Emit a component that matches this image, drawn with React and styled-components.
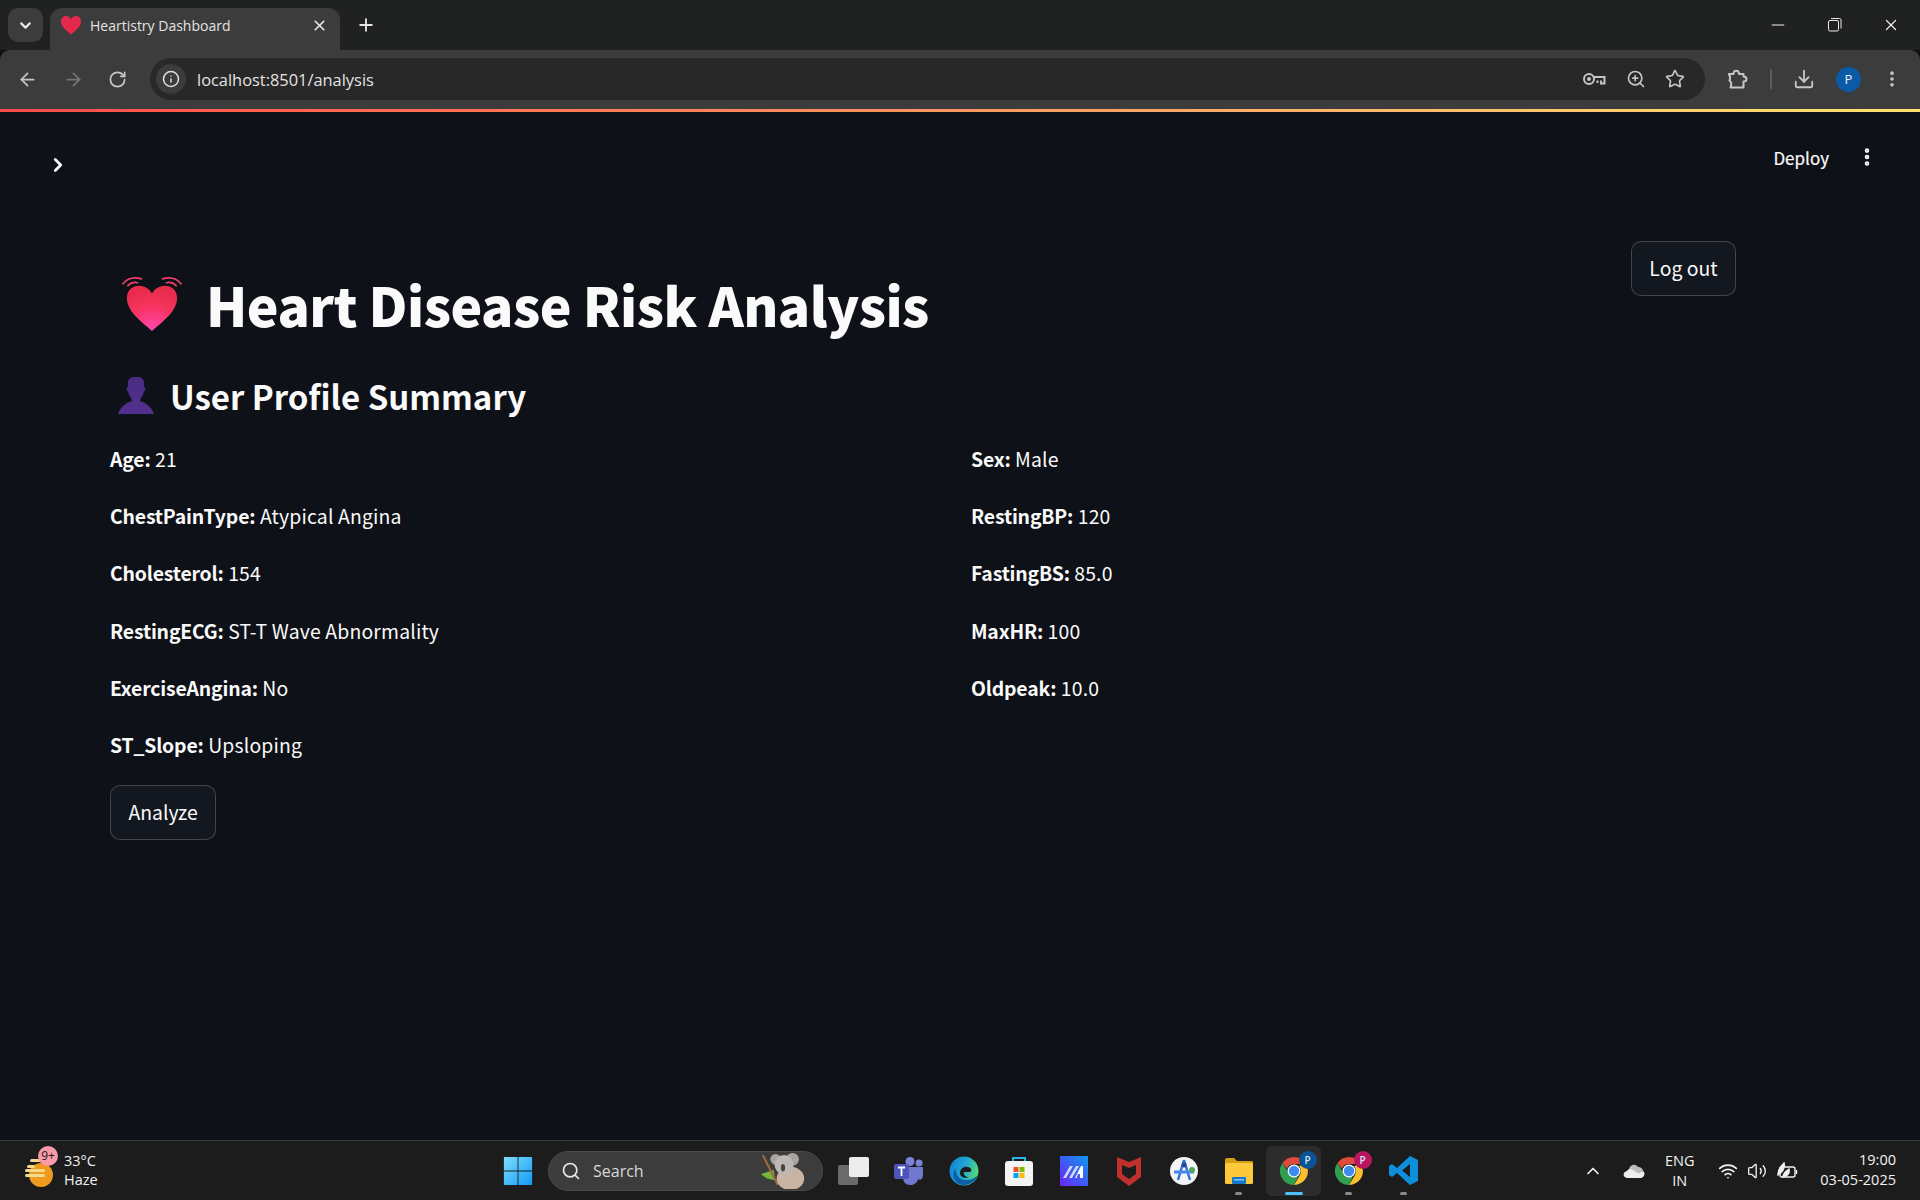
import React from 'react'
import styled, { createGlobalStyle } from 'styled-components'
import {
  ArrowLeft, ArrowRight, RotateCw, Info, ZoomIn, Star, Download, MoreVertical,
  Minus, X, Plus, ChevronDown, ChevronRight, ChevronUp, Search, Wifi, Volume2,
} from 'lucide-react'

const UI_FONT = `"Open Sans", "Noto Sans", sans-serif`
const PAGE_FONT = `"Noto Sans CJK SC", "Noto Sans", sans-serif`

const GlobalStyle = createGlobalStyle`
  html, body { margin: 0; padding: 0; background: #0e1117; }
  * { box-sizing: border-box; }
`

const profile = [
  ['Age', '21'], ['Sex', 'Male'],
  ['ChestPainType', 'Atypical Angina'], ['RestingBP', '120'],
  ['Cholesterol', '154'], ['FastingBS', '85.0'],
  ['RestingECG', 'ST-T Wave Abnormality'], ['MaxHR', '100'],
  ['ExerciseAngina', 'No'], ['Oldpeak', '10.0'],
  ['ST_Slope', 'Upsloping'],
]

function BeatingHeart() {
  return (
    <svg width="60" height="56" viewBox="0 0 62 58" fill="none">
      <defs>
        <radialGradient id="heartFill" cx="0.5" cy="0.95" r="0.85">
          <stop offset="0" stopColor="#ff46ac" />
          <stop offset="0.6" stopColor="#f7345f" />
          <stop offset="1" stopColor="#e92c4c" />
        </radialGradient>
      </defs>
      <path d="M31 57C24 50 5 38 5 23C5 14 11 10 18 10C24 10 29 14 31 18C33 14 38 10 44 10C51 10 57 14 57 23C57 38 38 50 31 57Z" fill="url(#heartFill)" />
      <path d="M1 8C6 2 13 1 20 3M6 10C9 7 12 6 16 7" stroke="#f23f6b" strokeWidth="1.800" strokeLinecap="round" />
      <path d="M61 8C56 2 49 1 42 3M56 10C53 7 50 6 46 7" stroke="#f23f6b" strokeWidth="1.800" strokeLinecap="round" />
    </svg>
  )
}

function Bust() {
  return (
    <svg width="40" height="40" viewBox="0 0 40 40">
      <defs>
        <linearGradient id="bustFill" x1="0" y1="0" x2="0" y2="1">
          <stop offset="0" stopColor="#4b2c83" />
          <stop offset="1" stopColor="#52308f" />
        </linearGradient>
      </defs>
      <path d="M12 7C12 2 15 1 20 1C25 1 28 2 28 7V11C30 11 30 15 28 15C27 20 24 23 24 25C31 27 36 32 38 38H2C4 32 9 27 16 25C16 23 13 20 12 15C10 15 10 11 12 11Z" fill="url(#bustFill)" />
    </svg>
  )
}

function TabHeart() {
  return (
    <svg width="22" height="20" viewBox="0 0 22 20">
      <path d="M11 19.500C7 16 1 12 1 6.500C1 3 3.500 1 6 1C8 1 10 2 11 4C12 2 14 1 16 1C18.500 1 21 3 21 6.500C21 12 15 16 11 19.500Z" fill="#e5294c" />
    </svg>
  )
}

function RestoreIcon() {
  return (
    <svg width="14" height="14" viewBox="0 0 14 14" fill="none" stroke="#e8e8e8" strokeWidth="1">
      <rect x="0.500" y="2.500" width="10" height="10.500" rx="1.500" />
      <path d="M3 0.500H11.500C12.500 0.500 13 1 13 2V10.500" />
    </svg>
  )
}

function KeyIcon() {
  return (
    <svg width="24" height="14" viewBox="0 0 24 14" fill="none" stroke="#c4c4c4" strokeWidth="2">
      <circle cx="7" cy="7" r="5" />
      <circle cx="7" cy="7" r="1" fill="#c4c4c4" />
      <path d="M12 5H22.500V11.500H19V8.500M15.500 8.500V11" />
    </svg>
  )
}

function ExtensionIcon() {
  return (
    <svg width="22" height="20" viewBox="0 0 22 20" fill="none" stroke="#c6c6c6" strokeWidth="2" strokeLinejoin="round">
      <path d="M2 5H6.500C6.500 0.500 12 0.500 12 5H16.500V7.500C20.500 7.500 20.500 12.500 16.500 12.500V18.500H3.500C4.500 16 4.500 13 2.500 11.500C3.500 9.500 3 7 2 5Z" />
    </svg>
  )
}

function WeatherIcon() {
  return (
    <svg width="30" height="30" viewBox="0 0 30 30">
      <circle cx="17" cy="17" r="12" fill="#ee9a1e" />
      <rect x="3" y="7" width="8" height="3" rx="1.500" fill="#f5d98d" />
      <rect x="6" y="1" width="14" height="3" rx="1.500" fill="#f5d98d" />
      <rect x="1" y="11" width="20" height="3" rx="1.500" fill="#f5d98d" />
      <rect x="1" y="16" width="20" height="3" rx="1.500" fill="#f5d98d" />
    </svg>
  )
}

function WindowsIcon() {
  return (
    <svg width="30" height="30" viewBox="0 0 34 34">
      <defs>
        <linearGradient id="winFill" x1="0" y1="0" x2="1" y2="1">
          <stop offset="0" stopColor="#7fdcff" />
          <stop offset="1" stopColor="#0f9bf2" />
        </linearGradient>
      </defs>
      <path d="M1 2a1 1 0 0 1 1-1H16.500V16.500H1ZM17.500 1H32a1 1 0 0 1 1 1V16.500H17.500ZM1 17.500H16.500V33H2a1 1 0 0 1-1-1ZM17.500 17.500H33V32a1 1 0 0 1-1 1H17.500Z" fill="url(#winFill)" />
    </svg>
  )
}

function Koala() {
  return (
    <svg width="50" height="36" viewBox="0 0 46 34">
      <path d="M2 20L14 16L16 26L8 24Z" fill="#77b53c" />
      <path d="M4 2L18 30" stroke="#a06a3c" strokeWidth="2" />
      <ellipse cx="30" cy="24" rx="13" ry="11" fill="#c9b4a4" />
      <circle cx="16" cy="6" r="5" fill="#a9a3a0" />
      <circle cx="32" cy="6" r="6" fill="#a9a3a0" />
      <ellipse cx="24" cy="11" rx="9" ry="9" fill="#bdb8b4" />
      <ellipse cx="23" cy="14" rx="2" ry="3.500" fill="#4a4543" />
    </svg>
  )
}

function TaskViewIcon() {
  return (
    <svg width="32" height="30" viewBox="0 0 32 30">
      <rect x="0" y="9" width="20" height="20" rx="2" fill="#6b6b6b" />
      <rect x="11" y="1" width="20" height="20" rx="2" fill="#ececec" />
    </svg>
  )
}

function TeamsIcon() {
  return (
    <svg width="30" height="28" viewBox="0 0 30 28">
      <circle cx="25" cy="6" r="3.500" fill="#7b83d8" />
      <circle cx="16" cy="4.500" r="4.500" fill="#7b83d8" />
      <path d="M9 10H29V18C29 22 26 24 24 22C23 26 20 28 16 28C12 28 9 25 9 20Z" fill="#7178cf" />
      <rect x="0" y="7" width="15" height="15" rx="2" fill="#4e55b8" />
      <path d="M4 10.500H11M7.500 10.500V19" stroke="#fff" strokeWidth="1.800" />
    </svg>
  )
}

function EdgeIcon() {
  return (
    <svg width="30" height="30" viewBox="0 0 30 30">
      <defs>
        <linearGradient id="edgeFill" x1="0" y1="0" x2="1" y2="0.300">
          <stop offset="0" stopColor="#0c7fd0" />
          <stop offset="0.600" stopColor="#23a8d6" />
          <stop offset="1" stopColor="#4fd67a" />
        </linearGradient>
      </defs>
      <circle cx="15" cy="15" r="14.500" fill="url(#edgeFill)" />
      <path d="M29 19C26 27 17 31 10 28C3 24 3 16 7 12C6 17 9 24 17 24C22 24 26 22 29 19Z" fill="#0a5fa8" />
      <path d="M11 17C11 13 15 10 19 11C23 12 23 15 21 16H15C14 19 17 21 20 21C16 23 11 21 11 17Z" fill="#1c1c1c" />
    </svg>
  )
}

function StoreIcon() {
  return (
    <svg width="28" height="30" viewBox="0 0 28 30">
      <path d="M8 6V2H20V6" fill="none" stroke="#2bb3e8" strokeWidth="2" />
      <rect x="0" y="5" width="28" height="25" rx="3" fill="#f4f4f4" />
      <rect x="8.500" y="11" width="5" height="5" fill="#f25022" />
      <rect x="14.500" y="11" width="5" height="5" fill="#7fba00" />
      <rect x="8.500" y="17" width="5" height="5" fill="#00a4ef" />
      <rect x="14.500" y="17" width="5" height="5" fill="#ffb900" />
    </svg>
  )
}

function MaIcon() {
  return (
    <svg width="28" height="30" viewBox="0 0 28 30">
      <defs>
        <linearGradient id="maFill" x1="0" y1="1" x2="1" y2="0">
          <stop offset="0" stopColor="#6a25f5" />
          <stop offset="1" stopColor="#1096f0" />
        </linearGradient>
      </defs>
      <rect width="28" height="30" fill="url(#maFill)" />
      <path d="M3 22L10 10H13L6 22ZM9 22L16 10H19L12 22Z" fill="#cfd8ff" />
      <path d="M15 22L21 10H23V22H20V18H18L16.500 22Z" fill="#fff" />
    </svg>
  )
}

function McafeeIcon() {
  return (
    <svg width="26" height="30" viewBox="0 0 26 30">
      <path d="M1 1L13 6L25 1V21L13 30L1 21ZM6 9V18L13 23L20 18V9L13 12Z" fill="#c0302c" fillRule="evenodd" />
    </svg>
  )
}

function StudioIcon() {
  return (
    <svg width="28" height="28" viewBox="0 0 28 28">
      <circle cx="14" cy="14" r="14" fill="#f4f4f4" />
      <path d="M14 3L8 23M14 3L20 23" stroke="#2f6fde" strokeWidth="2.400" />
      <path d="M4 15L24 15" stroke="#4a86f0" strokeWidth="3" />
      <circle cx="14" cy="8" r="2.500" fill="#2c4a8c" />
      <circle cx="22" cy="13" r="3" fill="#4fa860" />
    </svg>
  )
}

function FolderIcon() {
  return (
    <svg width="28" height="27" viewBox="0 0 28 27">
      <path d="M0 3a2 2 0 0 1 2-2H9L12 4H27a1 1 0 0 1 1 1V9H0Z" fill="#d99f12" />
      <rect x="0" y="6" width="28" height="21" rx="1.500" fill="#fbc93a" />
      <rect x="7" y="20" width="14" height="7" rx="1" fill="#1478c8" />
      <rect x="9" y="22" width="10" height="1.500" fill="#7fc8f5" />
    </svg>
  )
}

function ChromeLogo({ badge, badgeColor }) {
  return (
    <ChromeWrap>
      <svg width="28" height="28" viewBox="0 0 28 28">
        <path d="M14 0A14 14 0 0 1 26.100 7H14C10 7 7.500 9.500 7 12L2.500 6A14 14 0 0 1 14 0Z" fill="#e04a3a" />
        <path d="M26.100 7A14 14 0 0 1 14 28L20 18C21.500 15 21 11 19 9Z" fill="#fbc02d" />
        <path d="M14 28A14 14 0 0 1 2.500 6L8 15.500C10 19.500 14 21 18 19.500Z" fill="#2f9e4f" />
        <circle cx="14" cy="14" r="6.500" fill="#fff" />
        <circle cx="14" cy="14" r="5.200" fill="#3f8cf0" />
      </svg>
      <ChromeBadge $color={badgeColor}>{badge}</ChromeBadge>
    </ChromeWrap>
  )
}

function VsCodeIcon() {
  return (
    <svg width="29" height="29" viewBox="0 0 29 29">
      <path d="M21 0L29 4V25L21 29L8 17L3 21L0 19V10L3 8L8 12ZM21 8L13 14.500L21 21Z" fill="#0d8fdc" fillRule="evenodd" />
    </svg>
  )
}

function OneDriveIcon() {
  return (
    <svg width="22" height="14" viewBox="0 0 22 14">
      <path d="M6 5C7 1 12 -1 15 3C18 3 20 5 20 7L10 11Z" fill="#bdbdbd" />
      <path d="M4 14C0 14 -1 8 4 7C6 4 9 5 11 7L15 9L20 7C23 9 21 14 18 14Z" fill="#ededed" />
    </svg>
  )
}

function BatteryIcon() {
  return (
    <svg width="22" height="20" viewBox="0 0 22 20" fill="none" stroke="#f0f0f0" strokeWidth="1.400">
      <rect x="4" y="6" width="15" height="10" rx="2" />
      <path d="M20.500 9V13" />
      <path d="M2 13C2 8 5 5 8 2C9 6 8 10 2 14Z" fill="#f0f0f0" />
      <path d="M7 16C7 12 10 10 13 8C14 12 12 15 7 16Z" fill="#f0f0f0" />
    </svg>
  )
}

export default function App() {
  return (
    <Screen>
      <GlobalStyle />
      <TitleBar>
        <TabSearch><ChevronDown size={17} strokeWidth={3} color="#e8e8e8" /></TabSearch>
        <Tab>
          <TabHeart />
          <TabTitle>Heartistry Dashboard</TabTitle>
          <X size={17} strokeWidth={2.4} color="#e4e4e4" />
        </Tab>
        <NewTab><Plus size={20} strokeWidth={2.2} color="#e4e4e4" /></NewTab>
        <WindowControls>
          <Minus size={20} strokeWidth={1} absoluteStrokeWidth color="#f0f0f0" />
          <RestoreIcon />
          <X size={18} strokeWidth={1.200} absoluteStrokeWidth color="#f0f0f0" />
        </WindowControls>
      </TitleBar>

      <Toolbar>
        <NavIcons>
          <ArrowLeft size={21} strokeWidth={2} color="#c6c6c6" />
          <ArrowRight size={21} strokeWidth={2} color="#757575" />
          <RotateCw size={19} strokeWidth={2.200} color="#c6c6c6" />
        </NavIcons>
        <AddressBar>
          <InfoChip><Info size={18} strokeWidth={2} color="#e0e0e0" /></InfoChip>
          <Url>localhost:8501/analysis</Url>
          <AddressIcons>
            <KeyIcon />
            <ZoomIn size={20} strokeWidth={2} color="#c4c4c4" />
            <Star size={20} strokeWidth={2} color="#c4c4c4" />
          </AddressIcons>
        </AddressBar>
        <ToolbarEnd>
          <ExtensionIcon />
          <ToolbarDivider />
          <Download size={22} strokeWidth={2} color="#c6c6c6" />
          <Avatar>P</Avatar>
          <MoreVertical size={20} strokeWidth={2.400} color="#c6c6c6" />
        </ToolbarEnd>
      </Toolbar>
      <RainbowLine />

      <Page>
        <AppHeader>
          <SidebarToggle><ChevronRight size={22} strokeWidth={3} color="#fafafa" /></SidebarToggle>
          <HeaderActions>
            <Deploy>Deploy</Deploy>
            <MoreVertical size={22} strokeWidth={3} color="#fafafa" />
          </HeaderActions>
        </AppHeader>

        <Main>
          <TopRow>
            <Title>
              <BeatingHeart />
              Heart Disease Risk Analysis
            </Title>
            <StreamButton>Log out</StreamButton>
          </TopRow>
          <Subtitle>
            <Bust />
            User Profile Summary
          </Subtitle>
          <ProfileGrid>
            {profile.map(([label, value]) => (
              <ProfileItem key={label}><strong>{label}:</strong> {value}</ProfileItem>
            ))}
          </ProfileGrid>
          <StreamButton>Analyze</StreamButton>
        </Main>
      </Page>

      <Taskbar>
        <Weather>
          <WeatherIconWrap>
            <WeatherIcon />
            <WeatherBadge>9+</WeatherBadge>
          </WeatherIconWrap>
          <WeatherText>
            <span>33°C</span>
            <span>Haze</span>
          </WeatherText>
        </Weather>

        <TaskCenter>
          <StartButton><WindowsIcon /></StartButton>
          <SearchBox>
            <Search size={20} strokeWidth={2} color="#e8e8e8" />
            <SearchLabel>Search</SearchLabel>
            <Koala />
          </SearchBox>
          <TaskApp><TaskViewIcon /></TaskApp>
          <TaskApp><TeamsIcon /></TaskApp>
          <TaskApp><EdgeIcon /></TaskApp>
          <TaskApp><StoreIcon /></TaskApp>
          <TaskApp><MaIcon /></TaskApp>
          <TaskApp><McafeeIcon /></TaskApp>
          <TaskApp><StudioIcon /></TaskApp>
          <TaskApp $open><FolderIcon /></TaskApp>
          <TaskApp $active>
            <ChromeLogo badge="P" badgeColor="#0b5394" />
          </TaskApp>
          <TaskApp $open>
            <ChromeLogo badge="P" badgeColor="#b8175f" />
          </TaskApp>
          <TaskApp $open><VsCodeIcon /></TaskApp>
        </TaskCenter>

        <Tray>
          <ChevronUp size={20} strokeWidth={2} color="#f0f0f0" />
          <OneDriveIcon />
          <Lang>
            <span>ENG</span>
            <span>IN</span>
          </Lang>
          <TrayIcons>
            <Wifi size={20} strokeWidth={2} color="#f0f0f0" />
            <Volume2 size={20} strokeWidth={1.600} color="#f0f0f0" />
            <BatteryIcon />
          </TrayIcons>
          <Clock>
            <span>19:00</span>
            <span>03-05-2025</span>
          </Clock>
        </Tray>
      </Taskbar>
    </Screen>
  )
}

const Screen = styled.div`
  width: 1920px;
  height: 1200px;
  display: flex;
  flex-direction: column;
  overflow: hidden;
  background: #0e1117;
  font-family: ${UI_FONT};
`

const TitleBar = styled.div`
  height: 50px;
  flex: none;
  display: flex;
  align-items: flex-start;
  padding: 8px 0 0 8px;
  background: #202221;
`

const TabSearch = styled.div`
  width: 35px;
  height: 34px;
  border-radius: 10px;
  display: flex;
  align-items: center;
  justify-content: center;
  background: #3c3c3c;
`

const Tab = styled.div`
  width: 290px;
  height: 42px;
  margin-left: 7px;
  padding: 0 12px 8px 10px;
  border-radius: 12px 12px 0 0;
  display: flex;
  align-items: center;
  background: #3c3c3c;
`

const TabTitle = styled.span`
  flex: 1;
  margin-left: 8px;
  font-size: 14px;
  color: #e3e3e3;
`

const NewTab = styled.div`
  width: 32px;
  height: 34px;
  margin-left: 10px;
  display: flex;
  align-items: center;
  justify-content: center;
`

const WindowControls = styled.div`
  margin-left: auto;
  height: 34px;
  padding-right: 20px;
  display: flex;
  align-items: center;
  gap: 40px;
`

const Toolbar = styled.div`
  height: 59px;
  flex: none;
  padding-bottom: 1px;
  display: flex;
  align-items: center;
  background: #3c3c3c;
  border-radius: 10px 10px 0 0;
`

const NavIcons = styled.div`
  width: 150px;
  padding: 0 23px 0 17px;
  display: flex;
  align-items: center;
  justify-content: space-between;
`

const AddressBar = styled.div`
  width: 1555px;
  height: 42px;
  padding: 0 20px 0 6px;
  border-radius: 21px;
  display: flex;
  align-items: center;
  background: #282828;
`

const InfoChip = styled.div`
  width: 30px;
  height: 30px;
  border-radius: 50%;
  display: flex;
  align-items: center;
  justify-content: center;
  background: #3c3c3c;
`

const Url = styled.span`
  margin-left: 11px;
  font-size: 16.400px;
  color: #e3e3e3;
`

const AddressIcons = styled.div`
  margin-left: auto;
  width: 103px;
  display: flex;
  align-items: center;
  justify-content: space-between;
`

const ToolbarEnd = styled.div`
  flex: 1;
  padding: 0 18px 0 22px;
  display: flex;
  align-items: center;
  justify-content: space-between;
`

const ToolbarDivider = styled.div`
  width: 2px;
  height: 20px;
  background: #5c5c5c;
`

const Avatar = styled.div`
  width: 25px;
  height: 25px;
  border-radius: 50%;
  display: flex;
  align-items: center;
  justify-content: center;
  background: #0b5aa5;
  color: #e8f0fa;
  font-size: 13px;
`

const RainbowLine = styled.div`
  height: 3px;
  flex: none;
  background: linear-gradient(90deg, #ff4b4b 0%, #ff7a55 30%, #ffb56b 70%, #ffe36e 100%);
`

const Page = styled.main`
  flex: 1;
  min-height: 0;
  display: flex;
  flex-direction: column;
  font-family: ${PAGE_FONT};
  color: #fafafa;
`

const AppHeader = styled.header`
  height: 70px;
  flex: none;
  padding: 20px 42px 0 47px;
  display: flex;
  align-items: center;
  justify-content: space-between;
`

const SidebarToggle = styled.div`
  display: flex;
  margin-top: 16px;
`

const HeaderActions = styled.div`
  display: flex;
  align-items: center;
  gap: 27px;
`

const Deploy = styled.span`
  font-size: 17px;
  font-weight: 400;
  -webkit-text-stroke: 0.2px #fafafa;
`

const Main = styled.div`
  width: 1736px;
  padding: 59px 0 0 110px;
`

const TopRow = styled.div`
  display: flex;
  align-items: flex-start;
  justify-content: space-between;
`

const Title = styled.h1`
  margin: 24px 0 0 12px;
  display: flex;
  align-items: center;
  gap: 24px;
  font-size: 53.500px;
  line-height: 77px;
  font-weight: 900;
  letter-spacing: -0.550px;
`

const StreamButton = styled.button`
  height: 55px;
  padding: 0 17.500px 2px;
  flex: none;
  border: 1px solid rgba(250, 250, 250, 0.2);
  border-radius: 10px;
  background: #13171f;
  color: #fafafa;
  font-family: ${PAGE_FONT};
  font-size: 19.400px;
  line-height: 1;
`

const Subtitle = styled.h2`
  margin: 28px 0 0 6px;
  display: flex;
  align-items: center;
  gap: 14px;
  font-size: 33px;
  line-height: 52px;
  font-weight: 600;
`

const ProfileGrid = styled.div`
  margin: 22px 0 -2px;
  display: grid;
  grid-template-columns: 861px 1fr;
  grid-auto-rows: 57.200px;
`

const ProfileItem = styled.p`
  margin: 0;
  font-size: 19.400px;
  line-height: 30px;
  letter-spacing: 0.160px;

  strong {
    font-weight: 700;
    letter-spacing: -0.170px;
  }
`

const Taskbar = styled.footer`
  height: 60px;
  flex: none;
  display: flex;
  align-items: center;
  border-top: 1px solid #3a3a3a;
  background: #1c1c1c;
  color: #f2f2f2;
`

const Weather = styled.div`
  width: 503px;
  padding-left: 24px;
  display: flex;
  align-items: center;
  gap: 10px;
`

const WeatherIconWrap = styled.div`
  position: relative;
  width: 30px;
  height: 30px;
  margin-top: 4px;
`

const WeatherBadge = styled.span`
  position: absolute;
  top: -12px;
  left: 14px;
  width: 20px;
  height: 20px;
  border-radius: 50%;
  display: flex;
  align-items: center;
  justify-content: center;
  background: #f99aa9;
  color: #1c1c1c;
  font-size: 12px;
`

const WeatherText = styled.div`
  margin-top: -2px;
  display: flex;
  flex-direction: column;
  font-size: 14.500px;
  line-height: 19px;
`

const TaskCenter = styled.div`
  display: flex;
  align-items: center;
`

const StartButton = styled.div`
  width: 30px;
  height: 30px;
`

const SearchBox = styled.div`
  width: 275px;
  height: 40px;
  margin: 0 3px 0 15px;
  padding: 0 14px 0 12px;
  border-radius: 20px;
  display: flex;
  align-items: center;
  background: #3c3c3c;
  border: 1px solid #4a4a4a;
`

const SearchLabel = styled.span`
  flex: 1;
  margin-left: 12px;
  font-size: 16px;
  color: #d8d8d8;
`

const TaskApp = styled.div`
  position: relative;
  width: 55px;
  height: 50px;
  display: flex;
  align-items: center;
  justify-content: center;
  border-radius: 6px;
  background: ${p => (p.$active ? '#2c2c2c' : 'transparent')};

  &::after {
    content: '';
    display: ${p => (p.$open || p.$active ? 'block' : 'none')};
    position: absolute;
    bottom: 1px;
    left: 50%;
    width: ${p => (p.$active ? '18px' : '7px')};
    height: 3px;
    margin-left: ${p => (p.$active ? '-9px' : '-3.500px')};
    border-radius: 2px;
    background: ${p => (p.$active ? '#4cc2ff' : '#8a8a8a')};
  }
`

const ChromeWrap = styled.div`
  position: relative;
  width: 28px;
  height: 28px;
`

const ChromeBadge = styled.span`
  position: absolute;
  top: -6px;
  right: -9px;
  width: 18px;
  height: 18px;
  border-radius: 50%;
  display: flex;
  align-items: center;
  justify-content: center;
  background: ${p => p.$color};
  color: #dce6f2;
  font-size: 10px;
  font-weight: 600;
`

const Tray = styled.div`
  flex: 1;
  padding: 0 24px 0 152px;
  display: flex;
  align-items: center;
  gap: 20px;
`

const Lang = styled.div`
  display: flex;
  flex-direction: column;
  align-items: center;
  font-size: 14.500px;
  line-height: 20px;
`

const TrayIcons = styled.div`
  margin-left: 3px;
  display: flex;
  align-items: center;
  gap: 9px;
`

const Clock = styled.div`
  margin-left: auto;
  margin-top: -2px;
  display: flex;
  flex-direction: column;
  align-items: flex-end;
  font-size: 14.500px;
  line-height: 20px;
`
